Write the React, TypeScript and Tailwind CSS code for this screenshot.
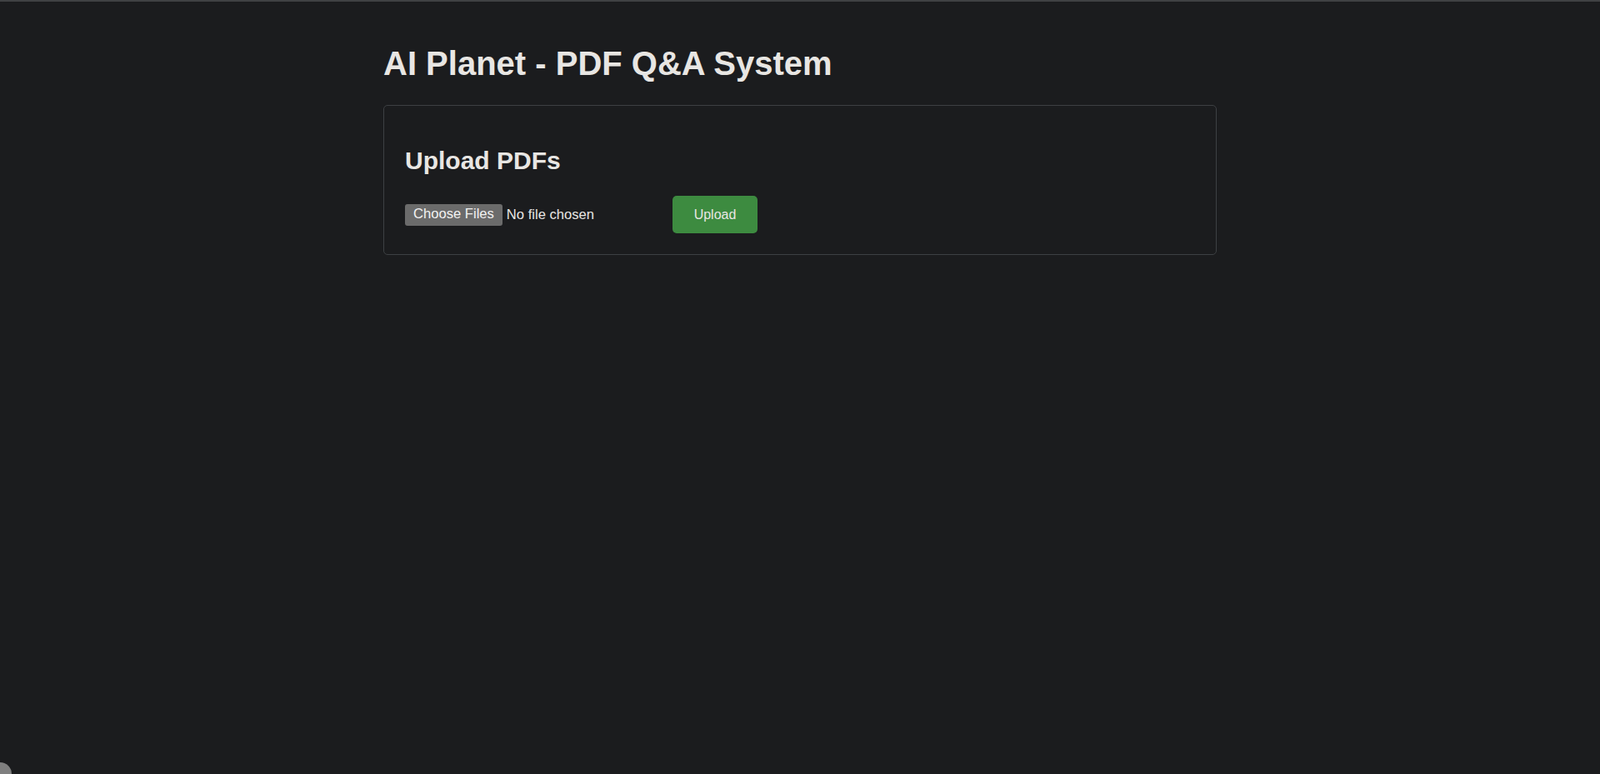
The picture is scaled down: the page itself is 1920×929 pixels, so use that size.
export default function App() {
  return (
    <div className="min-h-screen bg-[#1b1c1e] text-[#e8e6e3] [color-scheme:dark] font-['Liberation_Sans',Arial,sans-serif] relative overflow-hidden">
      {/* thin top rule */}
      <div className="h-[2px] w-full bg-[#3f4143]" />

      <main className="max-w-[1000px] mx-auto pt-[51px]">
        <h1 className="text-[40px] font-bold leading-[46px] mb-[27px]">AI Planet - PDF Q&amp;A System</h1>

        <section className="border border-[#3d4043] rounded-[5px] pt-[25px] px-[25px] pb-[25px]">
          <h2 className="text-[30px] font-bold leading-[35px] mt-[23px] mb-[25px]">Upload PDFs</h2>
          <div className="flex items-center">
            <input
              type="file"
              multiple
              accept="application/pdf"
              className="w-[311px] text-[16.6px] text-[#e8e6e3] file:h-[26px] file:px-[10px] file:mr-[5px] file:border-0 file:rounded-[3px] file:bg-[#6b6b6b] file:text-[#f2f2f2] file:text-[16.6px] file:font-['Liberation_Sans',Arial,sans-serif]"
            />
            <button className="ml-[10px] h-[45px] w-[102px] rounded-[5px] bg-[#3d8b40] text-[16px] text-[#e8e6e3]">
              Upload
            </button>
          </div>
        </section>
      </main>

      {/* corner widget peeking in */}
      <div className="fixed left-[-14px] bottom-[-14px] w-7 h-7 rounded-full bg-[#7f7f7f]" />
    </div>
  );
}
